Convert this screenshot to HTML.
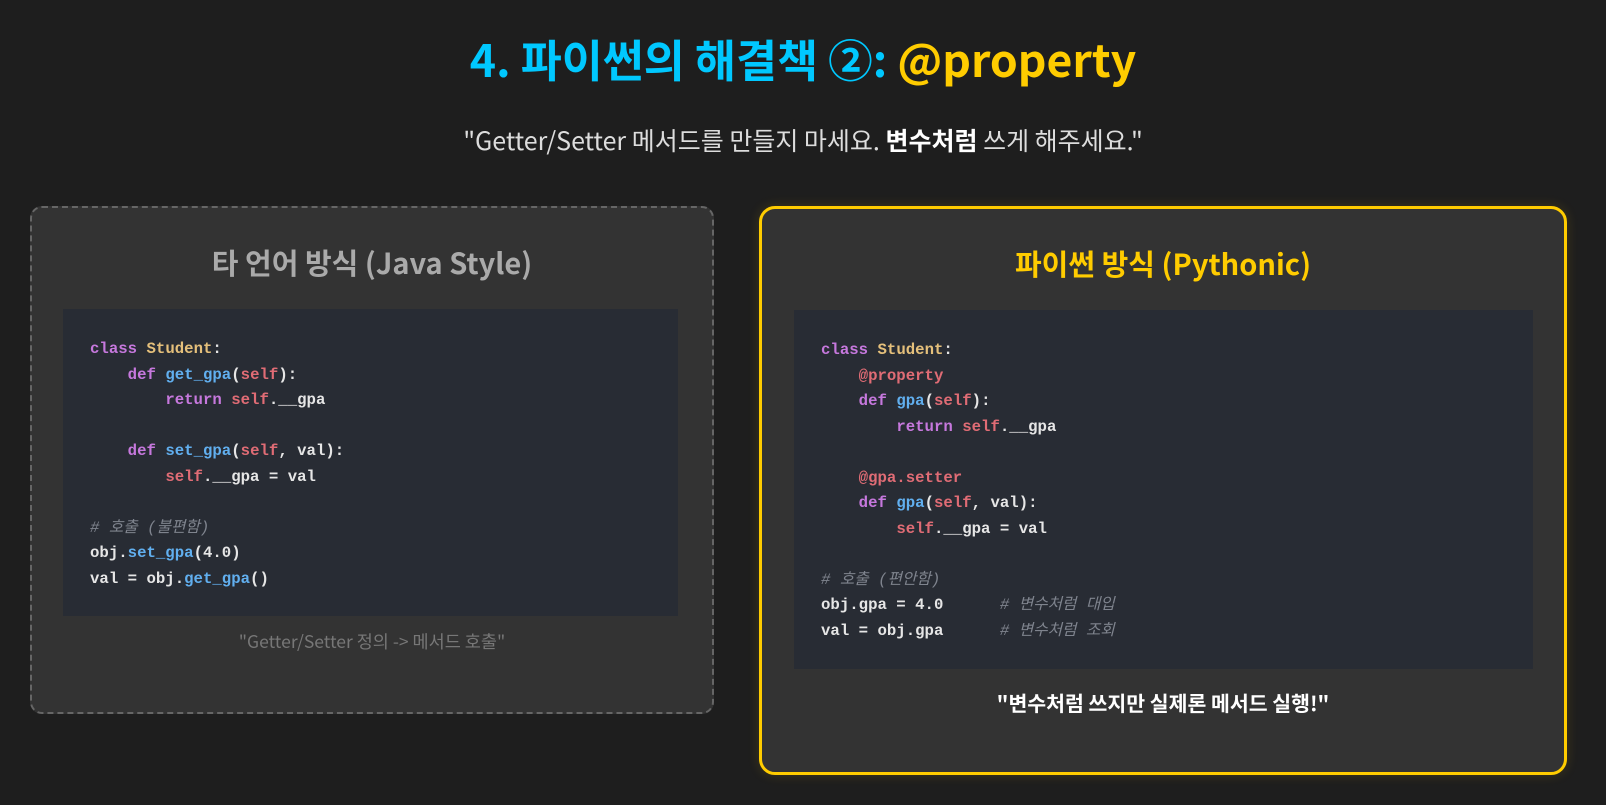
<!DOCTYPE html>
<html><head><meta charset="utf-8"><style>
*{margin:0;padding:0;box-sizing:border-box}
body{width:1606px;height:805px;background:#1e1e1e;font-family:"Noto Sans CJK KR","Liberation Sans",sans-serif;position:relative;overflow:hidden}
.t{position:absolute;left:0;width:1606px;text-align:center;top:25px;font-size:44.6px;font-weight:bold;color:#00c8ff;line-height:66px}
.t span{color:#ffcc00}
.s{position:absolute;left:0;width:1606px;text-align:center;top:123px;font-size:25px;color:#ddd;line-height:34px}
.box{position:absolute;background:#333;}
.l{left:30px;top:206px;width:684px;height:508px;border:2px dashed #666;border-radius:12px}
.r{left:759px;top:206px;width:808px;height:569px;border:3px solid #ffcc00;border-radius:16px;box-shadow:0 0 12px rgba(255,204,0,.15)}
.h{position:absolute;left:0;right:0;text-align:center;font-size:29px;font-weight:bold;line-height:40px}
.code{position:absolute;background:#282c34;font-family:"Liberation Mono","Noto Sans CJK KR",monospace;font-size:15.7px;font-weight:bold;color:#e6e6e6;line-height:25.5px;white-space:pre;padding-left:27px}
.k{color:#c678dd}.c{color:#e5c07b}.f{color:#61afef}.sf{color:#e06c75}.d{color:#e06c75}.cm{color:#7f848e;font-style:italic;font-weight:normal}
.cap{position:absolute;left:0;right:0;text-align:center;line-height:30px}
</style></head><body>
<div class="t">4. 파이썬의 해결책 ②: <span>@property</span></div>
<div class="s">"Getter/Setter 메서드를 만들지 마세요. <b style="color:#fff">변수처럼</b> 쓰게 해주세요."</div>
<div class="box l">
<div class="h" style="top:34px;color:#aaa">타 언어 방식 (Java Style)</div>
<div class="code" style="left:31px;top:101px;width:615px;height:307px;padding-top:28px"><span class="k">class</span> <span class="c">Student</span>:
    <span class="k">def</span> <span class="f">get_gpa</span>(<span class="sf">self</span>):
        <span class="k">return</span> <span class="sf">self</span>.__gpa

    <span class="k">def</span> <span class="f">set_gpa</span>(<span class="sf">self</span>, val):
        <span class="sf">self</span>.__gpa = val

<span class="cm"># 호출 (불편함)</span>
obj.<span class="f">set_gpa</span>(4.0)
val = obj.<span class="f">get_gpa</span>()</div>
<div class="cap" style="top:419px;color:#777;font-size:17.5px">"Getter/Setter 정의 -&gt; 메서드 호출"</div>
</div>
<div class="box r">
<div class="h" style="top:34px;color:#ffcc00">파이썬 방식 (Pythonic)</div>
<div class="code" style="left:32px;top:101px;width:739px;height:359px;padding-top:28px"><span class="k">class</span> <span class="c">Student</span>:
    <span class="d">@property</span>
    <span class="k">def</span> <span class="f">gpa</span>(<span class="sf">self</span>):
        <span class="k">return</span> <span class="sf">self</span>.__gpa

    <span class="d">@gpa.setter</span>
    <span class="k">def</span> <span class="f">gpa</span>(<span class="sf">self</span>, val):
        <span class="sf">self</span>.__gpa = val

<span class="cm"># 호출 (편안함)</span>
obj.gpa = 4.0      <span class="cm"># 변수처럼 대입</span>
val = obj.gpa      <span class="cm"># 변수처럼 조회</span></div>
<div class="cap" style="top:478px;color:#fff;font-size:20.5px;font-weight:bold">"변수처럼 쓰지만 실제론 메서드 실행!"</div>
</div>
</body></html>
